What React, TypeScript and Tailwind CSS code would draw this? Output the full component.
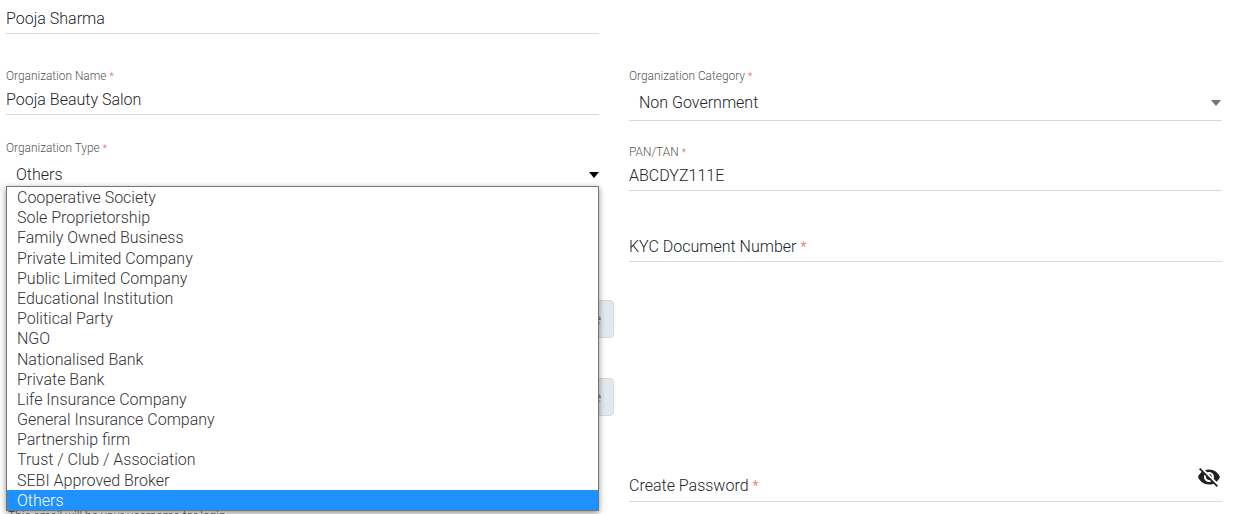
const orgTypes = [
  'Cooperative Society',
  'Sole Proprietorship',
  'Family Owned Business',
  'Private Limited Company',
  'Public Limited Company',
  'Educational Institution',
  'Political Party',
  'NGO',
  'Nationalised Bank',
  'Private Bank',
  'Life Insurance Company',
  'General Insurance Company',
  'Partnership firm',
  'Trust / Club / Association',
  'SEBI Approved Broker',
  'Others',
];

function Req({ small }: { small?: boolean }) {
  return <span className={small ? 'text-[#e9605c] ml-[3px] text-[10px]' : 'text-[#e9605c] ml-[4px] text-[14px]'}>*</span>;
}

function Caret({ className }: { className: string }) {
  return (
    <svg width="10" height="6" viewBox="0 0 10 6" className={className}>
      <path d="M0 0h10L5 6z" fill="currentColor" />
    </svg>
  );
}

function EyeOff() {
  return (
    <svg width="24" height="24" viewBox="0 0 24 24" fill="#212121">
      <path d="M12 7c2.76 0 5 2.24 5 5 0 .65-.13 1.26-.36 1.83l2.92 2.92c1.51-1.26 2.7-2.89 3.43-4.75-1.73-4.39-6-7.5-11-7.5-1.4 0-2.74.25-3.98.7l2.16 2.16C10.74 7.13 11.35 7 12 7zM2 4.27l2.28 2.28.46.46C3.08 8.3 1.78 10.02 1 12c1.73 4.39 6 7.5 11 7.5 1.55 0 3.03-.3 4.38-.84l.42.42L19.73 22 21 20.73 3.27 3 2 4.27zM7.53 9.8l1.55 1.55c-.05.21-.08.43-.08.65 0 1.66 1.34 3 3 3 .22 0 .44-.03.65-.08l1.55 1.55c-.67.33-1.41.53-2.2.53-2.76 0-5-2.24-5-5 0-.79.2-1.53.53-2.2zm4.31-.78l3.15 3.15.02-.16c0-1.66-1.34-3-3-3l-.17.01z" />
    </svg>
  );
}

function BrowseButton({ className }: { className: string }) {
  return (
    <div className={`${className} shrink-0 self-end -mr-[15px] w-[120px] h-[38px] rounded-[4px] bg-[#e3e8ec] border border-[#d5dade] pr-[12px] text-right text-[14px] leading-[36px] text-[#495057]`}>
      Browse
    </div>
  );
}

export default function App() {
  return (
    <div className="h-[514px] w-[1237px] overflow-hidden bg-white font-['Roboto',sans-serif] font-light text-[16px] text-[#212529] flex pl-[6px] gap-[30px]">
      <div className="w-[593px] shrink-0 relative flex flex-col">
        <div className="shrink-0 h-[34px] pt-[9px] leading-[20px] border-b border-[#d9d9d9]">Pooja Sharma</div>

        <div className="shrink-0 mt-[35px] h-[46px] border-b border-[#d9d9d9]">
          <div className="text-[11.9px] leading-[14px] text-[#555]">Organization Name<Req small /></div>
          <div className="mt-[6px] leading-[20px]">Pooja Beauty Salon</div>
        </div>

        <div className="shrink-0 mt-[26px] text-[11.9px] leading-[14px] text-[#555]">Organization Type<Req small /></div>
        <div className="shrink-0 mt-[9px] h-[20px] pl-[10px] leading-[20px] flex items-center justify-between">
          <span>Others</span>
          <Caret className="text-black" />
        </div>

        {/* covered by the open select list, only the right edge shows */}
        <BrowseButton className="mt-[115px]" />
        <BrowseButton className="mt-[40px]" />
        <div className="shrink-0 mt-[93px] ml-[2px] text-[12px] leading-[14px] text-[#555]">This email will be your username for login</div>

        <ul className="absolute left-0 top-[186px] w-[593px] h-[325px] bg-white border border-[#767676] shadow-[0_2px_6px_rgba(0,0,0,0.45)] text-[#333]">
          {orgTypes.map(t => (
            <li
              key={t}
              className={t === 'Others' ? 'h-[20.19px] leading-[22px] pl-[10px] bg-[#1e90ff] text-white' : 'h-[20.19px] leading-[22px] pl-[10px]'}
            >
              {t}
            </li>
          ))}
        </ul>
      </div>

      <div className="w-[593px] shrink-0 flex flex-col">
        <div className="shrink-0 mt-[69px] h-[52px] border-b border-[#d9d9d9]">
          <div className="text-[11.9px] leading-[14px] text-[#555]">Organization Category<Req small /></div>
          <div className="mt-[9px] pl-[10px] pr-[1px] leading-[20px] flex items-center justify-between">
            <span>Non Government</span>
            <Caret className="text-[#757575]" />
          </div>
        </div>

        <div className="shrink-0 mt-[24px] h-[46px] border-b border-[#d9d9d9]">
          <div className="text-[11.9px] leading-[14px] text-[#555]">PAN/TAN<Req small /></div>
          <div className="mt-[6px] leading-[20px]">ABCDYZ111E</div>
        </div>

        <div className="shrink-0 mt-[45px] h-[26px] pt-px leading-[20px] border-b border-[#d9d9d9]">
          KYC Document Number<Req />
        </div>

        <div className="shrink-0 mt-[203px] h-[37px] border-b border-[#d9d9d9] flex items-start justify-between">
          <span className="mt-[11px] leading-[20px]">Create Password<Req /></span>
          <span className="mr-px"><EyeOff /></span>
        </div>
      </div>
    </div>
  );
}
